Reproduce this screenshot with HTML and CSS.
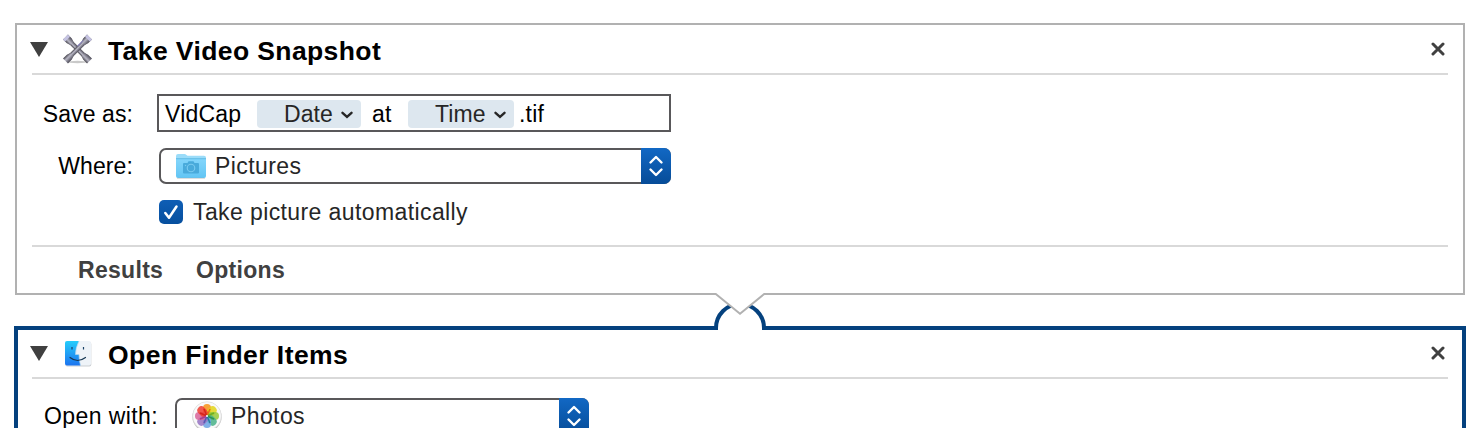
FILE: index.html
```
<!DOCTYPE html>
<html lang="en">
<head>
<meta charset="utf-8">
<title>Workflow</title>
<link rel="stylesheet" href="styles.css">
</head>
<body>
<svg width="0" height="0" class="defs">
  <defs>
    <linearGradient id="metal" x1="0" x2="1"><stop offset="0" stop-color="#45434c"/><stop offset=".4" stop-color="#b9b8c6"/><stop offset="1" stop-color="#4b4955"/></linearGradient>
    <linearGradient id="folder" x1="0" x2="0" y1="0" y2="1"><stop offset="0" stop-color="#83d5fb"/><stop offset="1" stop-color="#62c5f4"/></linearGradient>
    <linearGradient id="finder" x1="0" x2="0" y1="0" y2="1"><stop offset="0" stop-color="#25cdfb"/><stop offset="1" stop-color="#1c74ef"/></linearGradient>
  </defs>
</svg>
<main class="workflow">
  <section class="action">
    <header class="head">
      <svg class="disclosure" width="18" height="15"><path d="M0 0H18L9 15Z" fill="#404040"/></svg>
      <svg class="app-icon" width="30" height="30" viewBox="0 0 30 30">
        <ellipse cx="15.500" cy="28" rx="10" ry="1.200" fill="#c9c9c9"/>
        <g transform="rotate(-45 15.500 15)"><rect x="13.200" y="2" width="4.600" height="26" fill="url(#metal)"/><path d="M12-2h7v5.500l-1.200 3.500h-4.600l-1.200-3.500ZM12 32h7v-5.500l-1.200-3.500h-4.600l-1.200 3.500Z" fill="url(#metal)"/><path d="M12-2h7v3h-7z" fill="#c5c3e2"/></g>
        <g transform="rotate(45 15.500 15)"><rect x="13.200" y="2" width="4.600" height="26" fill="url(#metal)"/><path d="M12-2h7v5.500l-1.200 3.500h-4.600l-1.200-3.500ZM12 32h7v-5.500l-1.200-3.500h-4.600l-1.200 3.500Z" fill="url(#metal)"/><path d="M12-2h7v3h-7z" fill="#c5c3e2"/><path d="M13.500 5v8" stroke="#8983c4"/></g>
      </svg>
      <h2 class="title">Take Video Snapshot</h2>
      <svg class="close" width="14" height="14"><path d="M2 2l10 10M12 2L2 12" stroke="#404040" stroke-width="3" stroke-linecap="round"/></svg>
    </header>
    <div class="row row-save">
      <span class="label">Save as:</span>
      <div class="field">
        <span class="word vidcap">VidCap</span>
        <span class="token date">Date<svg width="12" height="8"><path d="M1.500 1.800L6 5.800l4.500-4" fill="none" stroke="#262626" stroke-width="2.400" stroke-linecap="round"/></svg></span>
        <span class="word at">at</span>
        <span class="token time">Time<svg width="12" height="8"><path d="M1.500 1.800L6 5.800l4.500-4" fill="none" stroke="#262626" stroke-width="2.400" stroke-linecap="round"/></svg></span>
        <span class="word ext">.tif</span>
      </div>
    </div>
    <div class="row row-where">
      <span class="label">Where:</span>
      <div class="select">
        <svg class="select-icon" width="32" height="28" viewBox="0 0 32 28">
          <path d="M1 3q0-2 2-2h6.500q1 0 2 1l1 .8h16.500q2 0 2 2V22H1Z" fill="#9bdcf9"/>
          <path d="M1 6H31V23q0 2-2 2H3q-2 0-2-2Z" fill="url(#folder)"/>
          <path d="M1 5.700H31" stroke="#53b3df" stroke-width=".8"/><path d="M2 25.300H30" stroke="#999" stroke-opacity=".5" stroke-width=".8"/>
          <path d="M8 11q0-1 1-1h3.500l1-1.800h5l1 1.800H23q1 0 1 1v8.500q0 1-1 1H9q-1 0-1-1Z" fill="#49aadb"/>
          <circle cx="16" cy="15" r="4.300" fill="#7acbf0"/><circle cx="16" cy="15" r="3.200" fill="#49aadb"/>
          <circle cx="10.500" cy="12.500" r=".7" fill="#7acbf0"/>
        </svg>
        <span class="value">Pictures</span>
        <span class="stepper"><svg width="16" height="22"><path d="M2.500 7.500L8 2 13.500 7.500M2.500 14.500L8 20 13.500 14.500" fill="none" stroke="#fff" stroke-width="2.400" stroke-linecap="round" stroke-linejoin="round"/></svg></span>
      </div>
    </div>
    <div class="row row-check">
      <span class="checkbox"><svg width="24" height="24"><path d="M6.300 13L10 17.800 17.500 6.500" fill="none" stroke="#fff" stroke-width="2.500" stroke-linecap="round" stroke-linejoin="round"/></svg></span>
      <span class="check-label">Take picture automatically</span>
    </div>
    <footer class="foot"><span class="results">Results</span><span class="options">Options</span></footer>
    <svg class="connector" width="60" height="40" viewBox="710 292 60 40">
      <path d="M719 326H761V330H719Z" fill="#fff"/>
      <path d="M716 330V328A24 24 0 0 1 764 328V330" fill="#fff" stroke="#04417e" stroke-width="4"/>
      <path d="M716 292V294L740 314 764 294V292Z" fill="#fff"/>
      <path d="M715.500 293.700L740 313.700 764.500 293.700" fill="none" stroke="#b1b1b1" stroke-width="2"/>
    </svg>
  </section>
  <section class="action selected">
    <header class="head">
      <svg class="disclosure" width="18" height="15"><path d="M0 0H18L9 15Z" fill="#404040"/></svg>
      <svg class="app-icon" width="30" height="30" viewBox="0 0 30 30">
        <rect x="2.300" y="3" width="26" height="24.500" rx="2" fill="#c9cdd1"/>
        <rect x="2" y="2" width="26" height="24.500" rx="2" fill="#eef3f8"/>
        <path d="M4 2H16Q12.500 9 12.500 15.500H16Q16 21 17.500 26.500H4Q2 26.500 2 24.500V4Q2 2 4 2Z" fill="url(#finder)"/>
        <path d="M16 2Q12.500 9 12.500 15.500H16Q16 21 17.500 26.500" fill="none" stroke="#b8d9ee" stroke-width=".7"/>
        <path d="M9 8v2.500M20.500 8v2.500" stroke="#173f65" stroke-width="1.200"/>
        <path d="M7 18.500Q14.500 24.500 22.500 18.500" fill="none" stroke="#173853" stroke-width="1.200" stroke-linecap="round"/>
      </svg>
      <h2 class="title">Open Finder Items</h2>
      <svg class="close" width="14" height="14"><path d="M2 2l10 10M12 2L2 12" stroke="#404040" stroke-width="3" stroke-linecap="round"/></svg>
    </header>
    <div class="row row-open">
      <span class="label">Open with:</span>
      <div class="select">
        <svg class="select-icon" width="32" height="32" viewBox="-16 -16 32 32">
          <circle cy=".8" r="14.700" fill="#c4c4c4"/><circle r="14.300" fill="#f9f9f9" stroke="#ddd" stroke-width=".7"/>
          <g class="petals">
            <rect x="-4" y="-12" width="8" height="11.500" rx="4" fill="#f7941d"/>
            <rect x="-4" y="-12" width="8" height="11.500" rx="4" fill="#e3d51f" transform="rotate(45)"/>
            <rect x="-4" y="-12" width="8" height="11.500" rx="4" fill="#9bcb3c" transform="rotate(90)"/>
            <rect x="-4" y="-12" width="8" height="11.500" rx="4" fill="#4db38b" transform="rotate(135)"/>
            <rect x="-4" y="-12" width="8" height="11.500" rx="4" fill="#6ea6e4" transform="rotate(180)"/>
            <rect x="-4" y="-12" width="8" height="11.500" rx="4" fill="#9775c4" transform="rotate(225)"/>
            <rect x="-4" y="-12" width="8" height="11.500" rx="4" fill="#d8699c" transform="rotate(270)"/>
            <rect x="-4" y="-12" width="8" height="11.500" rx="4" fill="#ee4136" transform="rotate(315)"/>
          </g>
          <path d="M0 0L-3-7M0 0L-7-3" stroke="#d5251c" stroke-width="1.500"/><path d="M0 0L3-7" stroke="#e96c14" stroke-width="1.500"/><path d="M0 0L7-3" stroke="#6fae24" stroke-width="1.500"/><path d="M0 0L7 3" stroke="#2d9551" stroke-width="1.500"/><path d="M0 0L3 7" stroke="#247f9b" stroke-width="1.500"/><path d="M0 0L-3 7" stroke="#5659b1" stroke-width="1.500"/><path d="M0 0L-7 3" stroke="#a83d8b" stroke-width="1.500"/>
          <circle r="1" fill="#fff"/>
        </svg>
        <span class="value">Photos</span>
        <span class="stepper"><svg width="16" height="22"><path d="M2.500 7.500L8 2 13.500 7.500M2.500 14.500L8 20 13.500 14.500" fill="none" stroke="#fff" stroke-width="2.400" stroke-linecap="round" stroke-linejoin="round"/></svg></span>
      </div>
    </div>
  </section>
</main>
</body>
</html>
```
FILE: styles.css
```
* { box-sizing: border-box; }
html, body { height: 100%; }
body {
  margin: 0;
  overflow: hidden;
  background: #fff;
  color: #000;
  font: 23px/28px "Liberation Sans", Arial, sans-serif;
  letter-spacing: .4px;
  white-space: nowrap;
}
svg { display: block; flex: none; }
.defs { position: absolute; }
.workflow { height: 428px; overflow: hidden; padding: 23px 14px 0; }
.action {
  position: relative;
  height: 272px;
  margin: 0 1px 31px;
  padding: 0 15px;
  border: 2px solid #b1b1b1;
}
.action.selected {
  height: 140px;
  margin: 0;
  padding: 0 14px;
  border: 4px solid #04417e;
}
.head {
  display: flex;
  align-items: flex-start;
  height: 50px;
  border-bottom: 2px solid #d9d9d9;
}
.selected .head { height: 49px; }
.disclosure { margin: 17px 0 0 -2px; }
.selected .disclosure { margin-top: 16px; }
.app-icon { margin: 9px 0 0 14px; }
.selected .app-icon { margin-top: 9px; margin-left: 15px; }
.title {
  margin: 10px 0 0 16px;
  font-size: 26.5px;
  line-height: 32px;
  letter-spacing: .4px;
}
.selected .title { margin-top: 9px; margin-left: 15px; letter-spacing: .45px; }
.close { margin: 17px 3px 0 auto; }
.selected .close { margin-top: 16px; }
.row { display: flex; align-items: center; }
.label { flex: none; text-align: right; letter-spacing: .1px; }
.row-save { height: 38px; margin-top: 19px; }
.row-save .label { width: 101px; padding-top: 2px; }
.field {
  display: flex;
  align-items: center;
  width: 514px;
  height: 38px;
  margin-left: 24px;
  padding-left: 6px;
  border: 2px solid #59585a;
}
.word { padding-top: 2px; letter-spacing: .2px; }
.vidcap { width: 92px; }
.token {
  display: flex;
  align-items: center;
  height: 28px;
  margin-top: 1px;
  border-radius: 4px;
  background: #dde7ef;
  color: #262626;
  letter-spacing: .1px;
}
.token svg { margin: 2px 0 0 auto; }
.date { width: 104px; padding: 0 8px 0 27px; }
.at { width: 47px; padding-left: 11px; }
.time { width: 106px; padding: 0 8px 0 27px; }
.ext { padding-left: 5px; }
.row-where { height: 36px; margin-top: 16px; }
.row-where .label { width: 101px; }
.select {
  display: flex;
  align-items: center;
  width: 512px;
  height: 36px;
  margin-left: 26px;
  border: 2px solid #59585a;
  border-radius: 7px;
  color: #262626;
}
.select-icon { margin-left: 14px; }
.row-where .select-icon { margin-top: 2px; }
.value { margin-left: 8px; }
.stepper {
  display: flex;
  align-items: center;
  justify-content: center;
  width: 30px;
  height: 36px;
  margin: -2px -2px -2px auto;
  border-radius: 0 7px 7px 0;
  background: linear-gradient(#1268c4, #064c98);
}
.row-check { height: 24px; margin-top: 16px; padding-left: 127px; }
.checkbox {
  width: 24px;
  height: 24px;
  border-radius: 5px;
  background: linear-gradient(#0f5eb5, #064f9e);
}
.check-label { margin-left: 10px; color: #262626; }
.foot {
  display: flex;
  height: 48px;
  margin-top: 21px;
  padding: 9px 0 0 46px;
  border-top: 2px solid #d9d9d9;
  color: #404040;
  font-weight: bold;
  letter-spacing: .3px;
}
.results { width: 118px; }
.connector { position: absolute; left: 693px; top: 267px; z-index: 1; }
.row-open { height: 36px; margin-top: 19px; }
.row-open .label { width: 126px; letter-spacing: .4px; }
.row-open .select { width: 414px; margin-left: 17px; }
.row-open .value { margin-left: 8px; }
.petals rect { opacity: .88; }
```
